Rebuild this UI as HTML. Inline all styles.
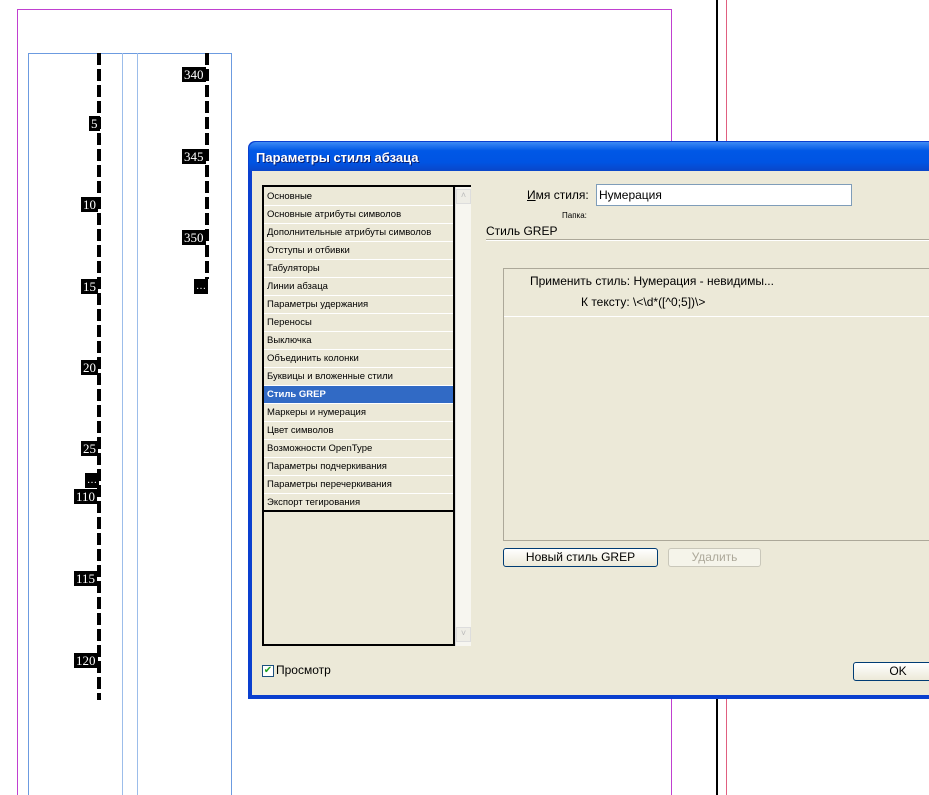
<!DOCTYPE html>
<html><head><meta charset="utf-8"><style>
*{margin:0;padding:0;box-sizing:border-box}
html,body{width:929px;height:795px;overflow:hidden}
body{background:#fff;position:relative;font-family:"Liberation Sans","DejaVu Sans",sans-serif}
.a{position:absolute}
.rule{position:absolute;width:4px;background:repeating-linear-gradient(#000 0 12px,transparent 12px 16px)}
.num{position:absolute;background:#000;color:#fff;font:13px "Liberation Serif",serif;line-height:15px;padding:0 2px}
.item{height:18px;border-bottom:1px solid #fff;font-size:9.5px;padding-left:3px;line-height:17px;color:#000;white-space:nowrap}
.sel{background:#316ac5;color:#fff;font-weight:bold}
.btn{position:absolute;border:1px solid #003c74;border-radius:3px;background:linear-gradient(#fff,#ece9d8);font-size:12px;text-align:center;line-height:16px}
</style></head><body>
<div class="a" style="left:17px;top:9px;width:655px;height:786px;border-left:1px solid #c040d0;border-top:1px solid #c040d0;border-right:1px solid #c040d0"></div>
<div class="a" style="left:716px;top:0;width:2px;height:795px;background:#000"></div>
<div class="a" style="left:726px;top:0;width:1px;height:795px;background:#e06080"></div>
<div class="a" style="left:28px;top:53px;width:204px;height:742px;border:1px solid #6c9be0;border-bottom:none"></div>
<div class="a" style="left:122px;top:53px;width:1px;height:742px;background:#9cbdea"></div>
<div class="a" style="left:137px;top:53px;width:1px;height:742px;background:#9cbdea"></div>
<div class="rule" style="left:97px;top:53px;height:647px"></div>
<div class="rule" style="left:205px;top:53px;height:226px"></div>
<div class="num" style="left:89px;top:116px">5</div>
<div class="num" style="left:81px;top:197px">10</div>
<div class="num" style="left:81px;top:279px">15</div>
<div class="num" style="left:81px;top:360px">20</div>
<div class="num" style="left:81px;top:441px">25</div>
<div class="num" style="left:85px;top:473px;font-size:10px">…</div>
<div class="num" style="left:74px;top:489px">110</div>
<div class="num" style="left:74px;top:571px">115</div>
<div class="num" style="left:74px;top:653px">120</div>
<div class="num" style="left:182px;top:67px">340</div>
<div class="num" style="left:182px;top:149px">345</div>
<div class="num" style="left:182px;top:230px">350</div>
<div class="num" style="left:194px;top:279px;font-size:10px">…</div>

<div class="a" style="left:248px;top:141px;width:690px;height:558px;background:#0a3fcf;border-radius:7px 7px 0 0"></div>
<div class="a" style="left:249px;top:142px;width:690px;height:29px;border-radius:7px 7px 0 0;background:linear-gradient(#3d8bf5,#0058e6 30%,#0054e3 70%,#0a46c8);color:#fff;font-size:13px;font-weight:bold;padding:8px 0 0 7px;text-shadow:1px 1px #0a1e6e">Параметры стиля абзаца</div>
<div class="a" style="left:252px;top:171px;width:680px;height:524px;background:#ece9d8"></div>

<div class="a" style="left:262px;top:185px;width:209px;height:461px;border:2px solid #000;border-right:none;background:#ece9d8">
<div class="a" style="left:0;top:0;width:191px;height:457px;border-right:2px solid #000;padding-top:1px">
<div class="item">Основные</div><div class="item">Основные атрибуты символов</div><div class="item">Дополнительные атрибуты символов</div><div class="item">Отступы и отбивки</div><div class="item">Табуляторы</div><div class="item">Линии абзаца</div><div class="item">Параметры удержания</div><div class="item">Переносы</div><div class="item">Выключка</div><div class="item">Объединить колонки</div><div class="item">Буквицы и вложенные стили</div><div class="item sel">Стиль GREP</div><div class="item">Маркеры и нумерация</div><div class="item">Цвет символов</div><div class="item">Возможности OpenType</div><div class="item">Параметры подчеркивания</div><div class="item">Параметры перечеркивания</div><div class="item" style="border-bottom:2px solid #000">Экспорт тегирования</div>
</div>
<div class="a" style="left:191px;top:0;width:16px;height:459px;background:#f7f6f0;border-left:1px solid #ddd"></div>
<div class="a" style="left:192px;top:2px;width:15px;height:15px;border:1px solid #ddd;background:#eeede6;color:#bbb;font-size:9px;text-align:center">˄</div>
<div class="a" style="left:192px;top:440px;width:15px;height:15px;border:1px solid #ddd;background:#eeede6;color:#bbb;font-size:9px;text-align:center">˅</div>
</div>

<div class="a" style="left:527px;top:188px;font-size:12px"><u>И</u>мя стиля:</div>
<div class="a" style="left:596px;top:184px;width:256px;height:22px;border:1px solid #7f9db9;background:#fff;font-size:12px;padding:3px 2px">Нумерация</div>
<div class="a" style="left:562px;top:211px;font-size:8px">Папка:</div>
<div class="a" style="left:486px;top:224px;font-size:12px">Стиль GREP</div>
<div class="a" style="left:486px;top:239px;width:450px;height:2px;border-top:1px solid #aca899;border-bottom:1px solid #fff"></div>
<div class="a" style="left:503px;top:268px;width:440px;height:273px;border:1px solid #aca899">
<div class="a" style="left:0;top:47px;width:440px;height:1px;background:#fff"></div>
</div>
<div class="a" style="left:530px;top:274px;font-size:12px">Применить стиль: Нумерация - невидимы...</div>
<div class="a" style="left:581px;top:295px;font-size:12px">К тексту: \&lt;\d*([^0;5])\&gt;</div>
<div class="btn" style="left:503px;top:548px;width:155px;height:19px">Новый стиль GREP</div>
<div class="btn" style="left:668px;top:548px;width:93px;height:19px;border-color:#c9c7ba;color:#aca899;background:#f5f4ea">Удалить</div>
<div class="a" style="left:262px;top:665px;width:12px;height:12px;border:1px solid #1c5180;background:#fff;color:#21a121;font-size:10px;line-height:10px;text-align:center;font-weight:bold">✔</div>
<div class="a" style="left:276px;top:663px;font-size:12px">Просмотр</div>
<div class="btn" style="left:853px;top:662px;width:90px;height:19px">OK</div>
</body></html>
